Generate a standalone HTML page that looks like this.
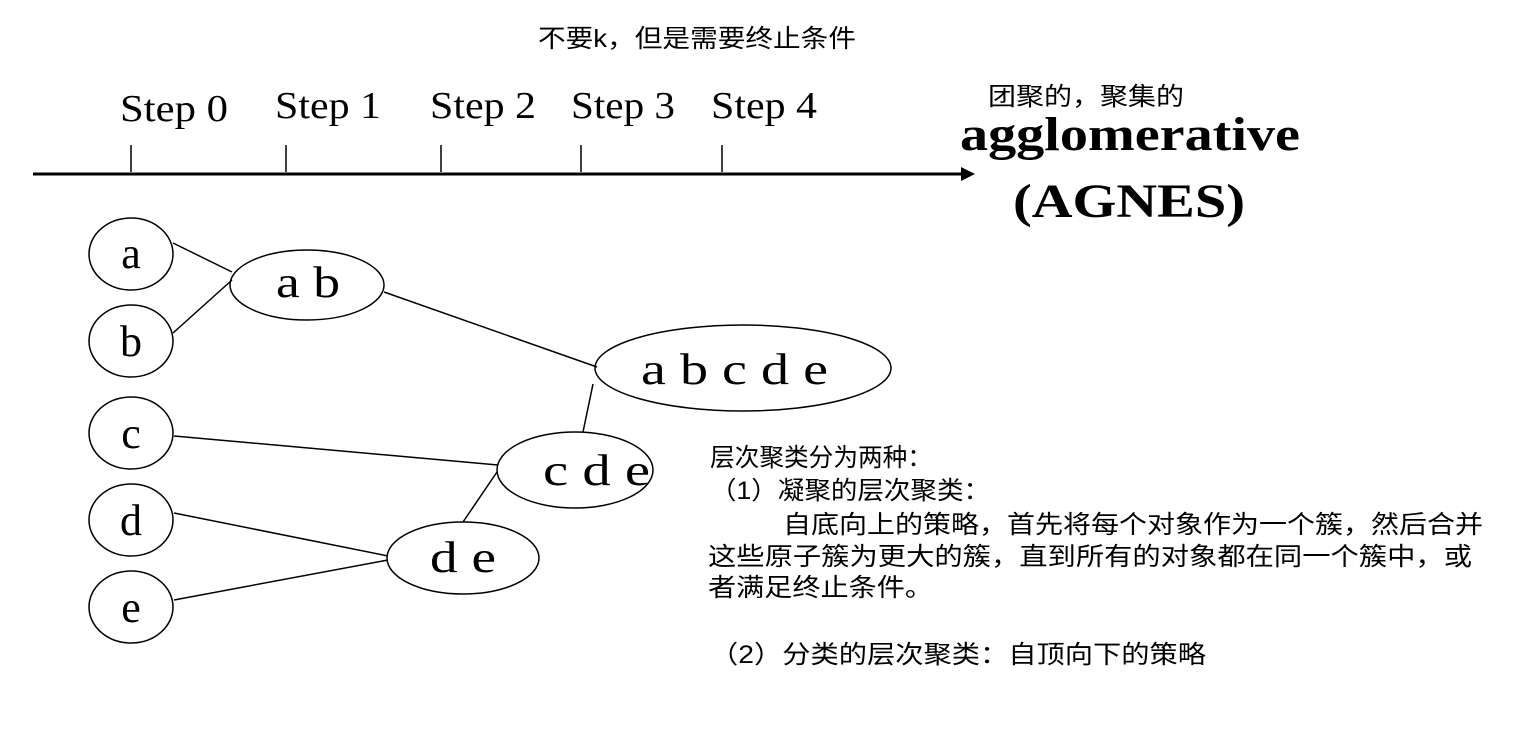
<!DOCTYPE html>
<html><head><meta charset="utf-8"><style>
html,body{margin:0;padding:0;background:#fff;}
svg{display:block}
.cn{font-family:"Liberation Sans","Noto Sans CJK SC",sans-serif;font-size:25px;fill:#000}
.sr{font-family:"Liberation Serif",serif;fill:#000}
</style></head><body>
<svg width="1514" height="752" viewBox="0 0 1514 752" xmlns="http://www.w3.org/2000/svg">
<text class="cn" x="538" y="47" font-size="23" textLength="318" lengthAdjust="spacingAndGlyphs">不要k，但是需要终止条件</text>
<g class="sr" font-size="38">
<text x="120" y="121" textLength="108" lengthAdjust="spacingAndGlyphs">Step 0</text>
<text x="275" y="118" textLength="106" lengthAdjust="spacingAndGlyphs">Step 1</text>
<text x="430" y="118" textLength="106" lengthAdjust="spacingAndGlyphs">Step 2</text>
<text x="571" y="118" textLength="104" lengthAdjust="spacingAndGlyphs">Step 3</text>
<text x="711" y="118" textLength="106" lengthAdjust="spacingAndGlyphs">Step 4</text>
</g>
<g stroke="#000" stroke-width="1.5">
<line x1="131" y1="145" x2="131" y2="172"/>
<line x1="286" y1="145" x2="286" y2="172"/>
<line x1="441" y1="145" x2="441" y2="172"/>
<line x1="581" y1="145" x2="581" y2="172"/>
<line x1="722" y1="145" x2="722" y2="172"/>
</g>
<line x1="33" y1="174" x2="965" y2="174" stroke="#000" stroke-width="3"/>
<polygon points="975,174 961,167 961,181" fill="#000"/>
<text class="cn" x="988" y="105" font-size="23" textLength="196" lengthAdjust="spacingAndGlyphs">团聚的，聚集的</text>
<text class="sr" x="960" y="150" font-size="48" font-weight="bold" textLength="340" lengthAdjust="spacingAndGlyphs">agglomerative</text>
<text class="sr" x="1013" y="217" font-size="48" font-weight="bold" textLength="232" lengthAdjust="spacingAndGlyphs">(AGNES)</text>
<g fill="none" stroke="#000" stroke-width="1.5">
<ellipse cx="131" cy="254" rx="42" ry="36"/>
<ellipse cx="131" cy="341" rx="42" ry="36"/>
<ellipse cx="131" cy="433" rx="42" ry="36"/>
<ellipse cx="131" cy="520" rx="42" ry="36"/>
<ellipse cx="131" cy="607" rx="42" ry="36"/>
<ellipse cx="307" cy="285" rx="77" ry="35"/>
<ellipse cx="743" cy="368" rx="148" ry="43"/>
<ellipse cx="575" cy="470" rx="78" ry="38"/>
<ellipse cx="463" cy="558" rx="76" ry="36"/>
<line x1="173" y1="243" x2="232" y2="272"/>
<line x1="173" y1="333" x2="232" y2="280"/>
<line x1="384" y1="292" x2="597" y2="367"/>
<line x1="593" y1="384" x2="583" y2="432"/>
<line x1="174" y1="436" x2="498" y2="465"/>
<line x1="497" y1="472" x2="463" y2="522"/>
<line x1="174" y1="513" x2="388" y2="556"/>
<line x1="174" y1="600" x2="388" y2="560"/>
</g>
<g class="sr" font-size="44">
<text x="131" y="268" text-anchor="middle">a</text>
<text x="131" y="356" text-anchor="middle">b</text>
<text x="131" y="448" text-anchor="middle">c</text>
<text x="131" y="535" text-anchor="middle">d</text>
<text x="131" y="622" text-anchor="middle">e</text>
<text x="276" y="297" textLength="64" lengthAdjust="spacingAndGlyphs">a b</text>
<text x="641" y="384" textLength="187" lengthAdjust="spacingAndGlyphs">a b c d e</text>
<text x="543" y="485" textLength="107" lengthAdjust="spacingAndGlyphs">c d e</text>
<text x="430" y="572" textLength="66" lengthAdjust="spacingAndGlyphs">d e</text>
</g>
<g class="cn">
<text x="710" y="466" textLength="222" lengthAdjust="spacingAndGlyphs">层次聚类分为两种：</text>
<text x="710" y="499" textLength="280" lengthAdjust="spacingAndGlyphs">（1）凝聚的层次聚类：</text>
<text x="783" y="533" textLength="700" lengthAdjust="spacingAndGlyphs">自底向上的策略，首先将每个对象作为一个簇，然后合并</text>
<text x="708" y="565" textLength="764" lengthAdjust="spacingAndGlyphs">这些原子簇为更大的簇，直到所有的对象都在同一个簇中，或</text>
<text x="708" y="596" textLength="225" lengthAdjust="spacingAndGlyphs">者满足终止条件。</text>
<text x="710" y="663" textLength="496" lengthAdjust="spacingAndGlyphs">（2）分类的层次聚类：自顶向下的策略</text>
</g>
</svg>
</body></html>
